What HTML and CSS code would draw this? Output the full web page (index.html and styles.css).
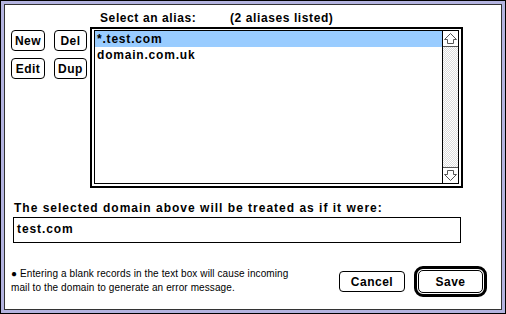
FILE: index.html
```html
<!DOCTYPE html>
<html lang="en">
<head>
  <meta charset="UTF-8" />
  <title>Domain Aliases</title>
  <link rel="stylesheet" href="styles.css">
</head>
<body>

  <div class="window">
    <div class="panel">

      <div class="top">
        <div class="tools">
          <button class="btn">New</button>
          <button class="btn">Del</button>
          <button class="btn">Edit</button>
          <button class="btn">Dup</button>
        </div>

        <div class="browser">
          <div class="heading">
            <span class="heading-left">Select an alias:</span>
            <span>(2 aliases listed)</span>
          </div>
          <div class="listbox">
            <div class="list-inner">
              <ul class="rows">
                <li class="selected">*.test.com</li>
                <li>domain.com.uk</li>
              </ul>
              <div class="scrollbar">
                <div class="arrow arrow-up">
                  <svg width="15" height="15" viewBox="0 0 15 15">
                    <path d="M7.5 2.5 L13.5 8.5 H10.5 V12.5 H4.5 V8.5 H1.5 Z" fill="#fff" stroke="#555" stroke-width="1"/>
                  </svg>
                </div>
                <div class="track"></div>
                <div class="arrow arrow-down">
                  <svg width="15" height="15" viewBox="0 0 15 15">
                    <path d="M7.5 12.5 L13.5 6.5 H10.5 V2.5 H4.5 V6.5 H1.5 Z" fill="#fff" stroke="#555" stroke-width="1"/>
                  </svg>
                </div>
              </div>
            </div>
          </div>
        </div>
      </div>

      <div class="field-label">The selected domain above will be treated as if it were:</div>
      <div class="field">test.com</div>

      <div class="bottom">
        <p class="note">● Entering a blank records in the text box will cause incoming<br/>mail to the domain to generate an error message.</p>
        <div class="actions">
          <button class="btn btn-cancel">Cancel</button>
          <div class="default-ring">
            <button class="btn btn-save">Save</button>
          </div>
        </div>
      </div>

    </div>
  </div>

</body>
</html>
```

FILE: styles.css
```css
body {
  margin: 0;
  background: #fff;
  font-family: "Liberation Sans", Arial, sans-serif;
  color: #000;
}

.window {
  width: 506px;
  height: 314px;
  box-sizing: border-box;
  border: 1px solid #000;
  padding: 3px;
  background: #b4b4e0;
}

.panel {
  height: 100%;
  box-sizing: border-box;
  border: 1px solid #333;
  background: #fff;
  padding-top: 6px;
}

.btn {
  font-family: "Liberation Sans", Arial, sans-serif;
  font-weight: bold;
  font-size: 12px;
  letter-spacing: 0.5px;
  color: #000;
  background: #fff;
  border: 1px solid #000;
  border-radius: 4px;
  padding: 0;
  height: 21px;
  box-sizing: border-box;
}

/* top part: tool buttons + alias list */
.top {
  display: flex;
  padding-left: 6px;
}

.tools {
  display: grid;
  grid-template-columns: 34px 33px;
  grid-auto-rows: 21px;
  column-gap: 9px;
  row-gap: 7px;
  margin-top: 19px;
  align-self: flex-start;
}

.browser {
  margin-left: 3px;
}

.heading {
  font-weight: bold;
  font-size: 12px;
  letter-spacing: 0.6px;
  line-height: 14px;
  padding-left: 10px;
  margin-bottom: 2px;
  white-space: nowrap;
}

.heading-left {
  display: inline-block;
  width: 126px;
}

.listbox {
  width: 373px;
  height: 161px;
  box-sizing: border-box;
  border: 2px solid #000;
  padding: 1px 2px 2px 2px;
}

.list-inner {
  height: 100%;
  box-sizing: border-box;
  border: 1px solid #000;
  display: flex;
}

.rows {
  flex: 1;
  list-style: none;
  margin: 0;
  padding: 0;
}

.rows li {
  height: 16px;
  line-height: 17px;
  padding-left: 2px;
  font-weight: bold;
  font-size: 12px;
  letter-spacing: 0.8px;
}

.rows li.selected {
  background: #99ccff;
}

.scrollbar {
  width: 15px;
  border-left: 1px solid #000;
  display: flex;
  flex-direction: column;
}

.arrow {
  height: 15px;
  background: #fff;
}

.arrow svg {
  display: block;
}

.arrow-up {
  border-bottom: 1px solid #555;
}

.arrow-down {
  border-top: 1px solid #555;
}

.track {
  flex: 1;
  background: repeating-conic-gradient(#dcdcdc 0 25%, #fff 0 50%) 0 0 / 2px 2px;
}

/* target domain */
.field-label {
  font-weight: bold;
  font-size: 12px;
  letter-spacing: 1px;
  line-height: 14px;
  margin: 13px 0 2px 9px;
}

.field {
  width: 448px;
  height: 26px;
  box-sizing: border-box;
  margin-left: 8px;
  border: 1px solid #000;
  padding-left: 3px;
  font-weight: bold;
  font-size: 12px;
  letter-spacing: 0.9px;
  line-height: 22px;
}

/* bottom: note + dialog buttons */
.bottom {
  display: flex;
  align-items: flex-start;
  margin-top: 23px;
  padding: 0 14px 0 6px;
}

.note {
  flex: 1;
  margin: 1px 0 0 0;
  font-size: 10px;
  letter-spacing: 0.1px;
  line-height: 14px;
  white-space: nowrap;
}

.actions {
  display: flex;
  align-items: center;
  gap: 9px;
}

.btn-cancel {
  width: 66px;
}

.default-ring {
  width: 73px;
  height: 31px;
  box-sizing: border-box;
  border: 3px solid #000;
  border-radius: 9px;
  padding: 1px;
}

.btn-save {
  width: 100%;
  height: 100%;
  border-radius: 5px;
}
```
